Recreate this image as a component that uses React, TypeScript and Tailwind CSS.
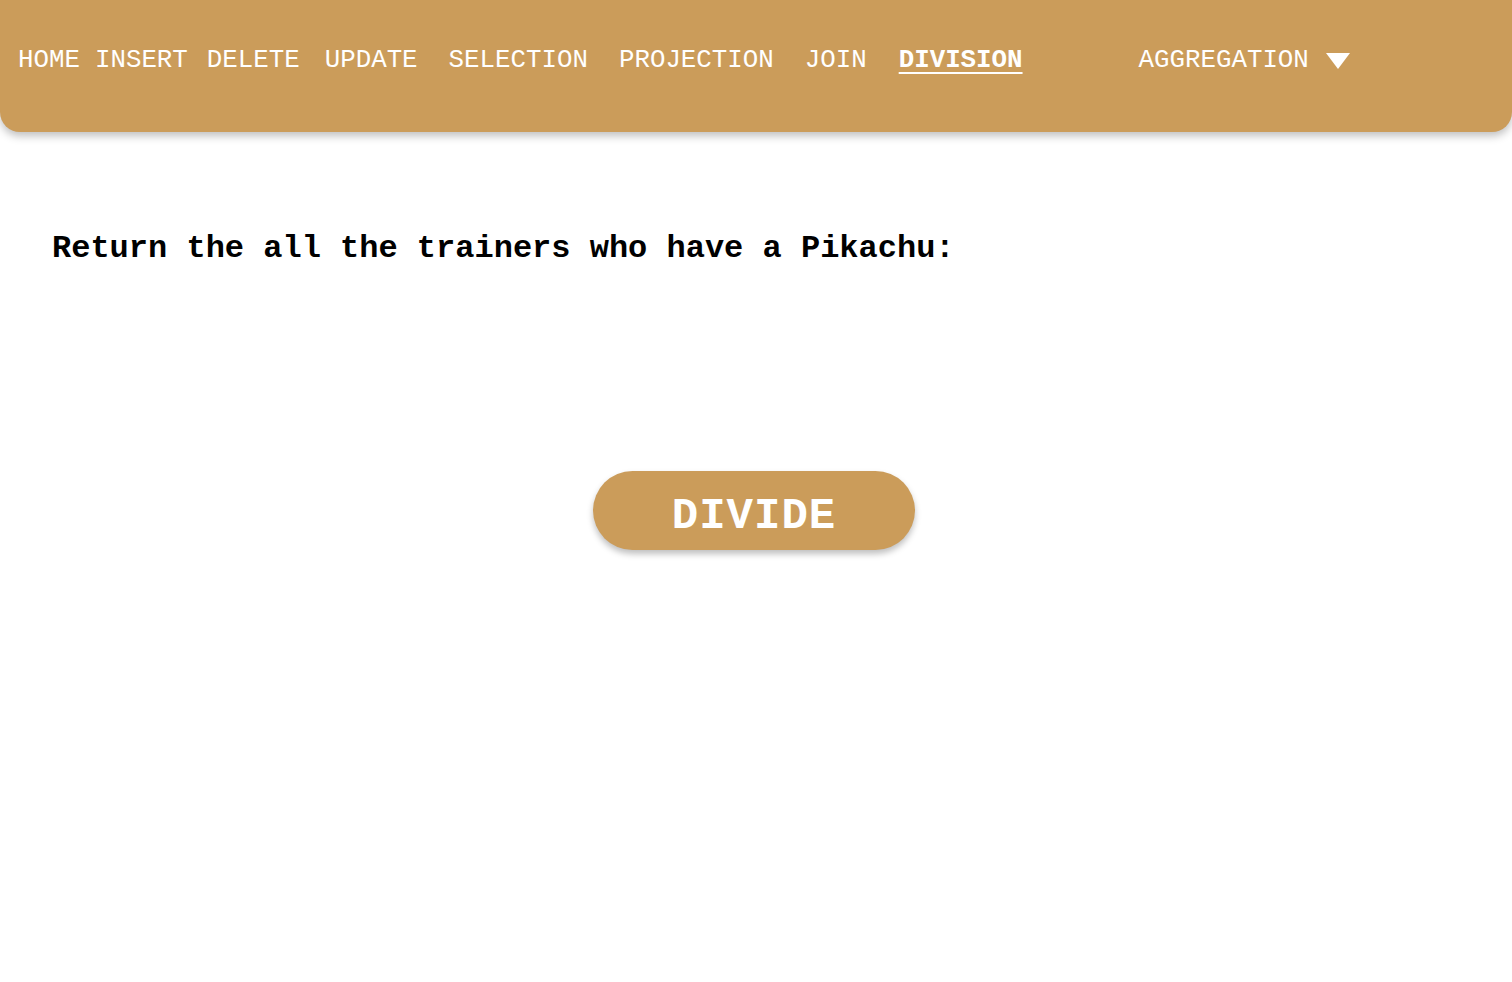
const navItems = [
  { label: "HOME", cls: "ml-[18px]" },
  { label: "INSERT", cls: "ml-[15px]" },
  { label: "DELETE", cls: "ml-[19px]" },
  { label: "UPDATE", cls: "ml-[25px]" },
  { label: "SELECTION", cls: "ml-[31px]" },
  { label: "PROJECTION", cls: "ml-[31px]" },
  { label: "JOIN", cls: "ml-[31px]" },
];

export default function App() {
  return (
    <div className="min-h-screen bg-white font-['Liberation_Mono','Courier_New',monospace]">
      {/* Nav */}
      <nav className="flex h-[132px] items-start rounded-b-[20px] bg-[#cb9c5a] pt-[45px] text-white shadow-[0_4px_8px_rgba(0,0,0,0.25)]">
        <div className="flex items-center text-[25.8px] leading-[32px]">
          {navItems.map((item) => (
            <a key={item.label} className={`${item.cls} cursor-pointer`}>
              {item.label}
            </a>
          ))}
          <a className="ml-[32px] cursor-pointer font-bold underline underline-offset-[5px]">
            DIVISION
          </a>
          <div className="ml-[116px] flex items-center">
            <span>AGGREGATION</span>
            <svg
              className="ml-[16px]"
              width="26"
              height="18"
              viewBox="0 0 26 18"
            >
              <polygon points="1,1 25,1 13,17" fill="white" />
            </svg>
          </div>
        </div>
      </nav>

      {/* Content */}
      <div className="px-[52px] pt-[99px]">
        <h2 className="text-[32px] leading-[36px] font-bold text-black">
          Return the all the trainers who have a Pikachu:
        </h2>
      </div>

      <div className="mt-[204px] flex justify-center">
        <button className="mr-[4px] flex h-[79px] w-[322px] items-center justify-center rounded-full bg-[#cb9c5a] pt-[10px] text-[44px] font-bold tracking-[1px] text-white shadow-[0_4px_6px_rgba(0,0,0,0.25)]">
          DIVIDE
        </button>
      </div>
    </div>
  );
}
